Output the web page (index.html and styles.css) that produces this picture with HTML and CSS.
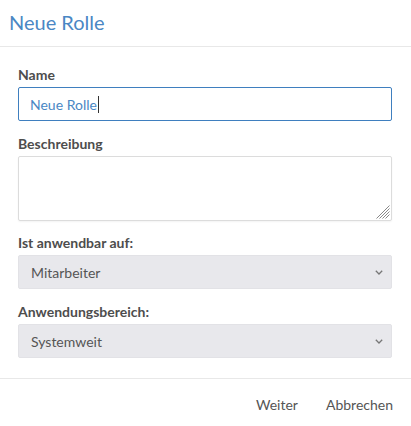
FILE: index.html
```html
<!DOCTYPE html>
<html lang="de">
<head>
<meta charset="utf-8">
<title>Neue Rolle</title>
<link rel="stylesheet" href="styles.css">
</head>
<body>
<div class="dialog">
  <header class="dialog-header">
    <h1 class="dialog-title">Neue Rolle</h1>
  </header>
  <div class="dialog-body">
    <div class="field">
      <label class="field-label">Name</label>
      <div class="text-input focused"><span class="text-value">Neue Rolle</span><span class="caret"></span></div>
    </div>
    <div class="field">
      <label class="field-label">Beschreibung</label>
      <div class="textarea-wrap">
        <textarea class="textarea"></textarea>
        <svg class="grip" width="14" height="14" viewBox="0 0 14 14"><g stroke="#888" stroke-width="1"><line x1="13.5" y1="0.5" x2="0.5" y2="13.5"/><line x1="13.5" y1="3.5" x2="3.5" y2="13.5"/><line x1="13.5" y1="6.5" x2="6.5" y2="13.5"/><line x1="13.5" y1="9.5" x2="9.5" y2="13.5"/></g></svg>
      </div>
    </div>
    <div class="field">
      <label class="field-label">Ist anwendbar auf:</label>
      <div class="select-wrap">
        <select class="select"><option>Mitarbeiter</option></select>
        <svg class="chevron" width="8" height="5" viewBox="0 0 8 5"><path d="M0.8 0.8 L4 4 L7.2 0.8" fill="none" stroke="#777" stroke-width="1.3"/></svg>
      </div>
    </div>
    <div class="field">
      <label class="field-label">Anwendungsbereich:</label>
      <div class="select-wrap">
        <select class="select"><option>Systemweit</option></select>
        <svg class="chevron" width="8" height="5" viewBox="0 0 8 5"><path d="M0.8 0.8 L4 4 L7.2 0.8" fill="none" stroke="#777" stroke-width="1.3"/></svg>
      </div>
    </div>
  </div>
  <footer class="dialog-footer">
    <button class="btn-link">Weiter</button>
    <button class="btn-link">Abbrechen</button>
  </footer>
</div>
</body>
</html>
```
FILE: styles.css
```css
* { box-sizing: border-box; }
html, body { margin: 0; padding: 0; background: #fff; }
body { font-family: Lato, "Open Sans", sans-serif; color: #4a4a4a; }

.dialog { width: 411px; }

.dialog-header {
  padding: 10px 9px 12px;
  border-bottom: 1px solid #e8e8e8;
}
.dialog-title {
  margin: 0;
  font-size: 20px;
  line-height: 24px;
  font-weight: 400;
  color: #4a87c4;
}

.dialog-body {
  padding: 18px 19px 20px 18px;
  display: flex;
  flex-direction: column;
  gap: 12.7px;
}
.field { display: flex; flex-direction: column; }
.field-label {
  font-size: 14px;
  line-height: 20px;
  font-weight: 700;
  color: #4d4d4d;
  margin-bottom: 2px;
}

.text-input {
  height: 34px;
  border: 1px solid #3f7fbf;
  border-radius: 2px;
  padding: 0 11px;
  display: flex;
  align-items: center;
  font-size: 14px;
  color: #4a87c4;
}
.caret {
  display: inline-block;
  width: 1px;
  height: 17px;
  background: #333;
  margin-left: 1px;
}

.textarea-wrap { position: relative; }
.textarea {
  display: block;
  width: 100%;
  height: 65px;
  border: 1px solid #dcdcdc;
  border-radius: 2px;
  box-shadow: 0 1px 2px rgba(0,0,0,0.05);
  resize: none;
  font-family: Lato, sans-serif;
  font-size: 14px;
  padding: 6px 11px;
  margin: 0;
  outline: none;
}
.grip {
  position: absolute;
  right: 2px;
  bottom: 2px;
  pointer-events: none;
}

.select-wrap { position: relative; }
.select {
  -webkit-appearance: none;
  appearance: none;
  width: 100%;
  height: 34px;
  margin: 0;
  border: 1px solid #e2e2e6;
  border-radius: 2px;
  background: #e8e8ec;
  font-family: Lato, sans-serif;
  font-size: 14px;
  color: #555;
  padding: 0 12px;
  outline: none;
}
.chevron {
  position: absolute;
  right: 9px;
  top: 15px;
  pointer-events: none;
}

.dialog-footer {
  border-top: 1px solid #e8e8e8;
  padding: 10px 6px 10px 0;
  display: flex;
  justify-content: flex-end;
  gap: 4px;
}
.btn-link {
  border: 0;
  background: transparent;
  font-family: Lato, sans-serif;
  font-size: 14px;
  line-height: 20px;
  color: #555;
  padding: 6px 12px;
  cursor: pointer;
}
```
